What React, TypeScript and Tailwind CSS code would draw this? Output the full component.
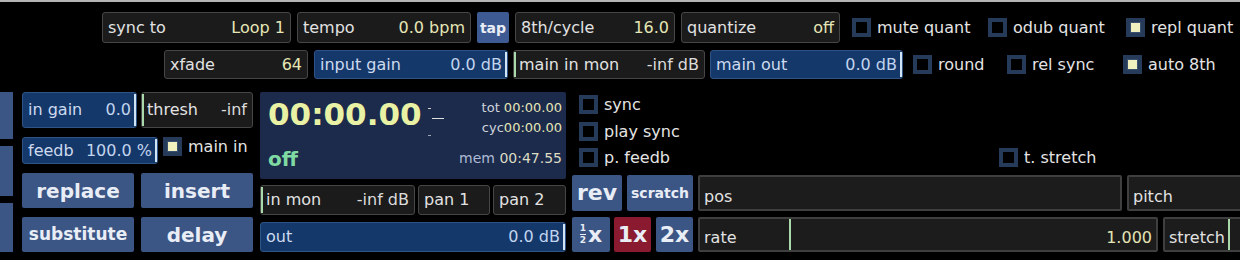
import clsx from "clsx";

type Mark = "left" | "right" | "none";

function Field({
  label,
  value,
  blue,
  mark = "none",
  valueClass,
  className,
}: {
  label: string;
  value?: string;
  blue?: boolean;
  mark?: Mark;
  valueClass?: string;
  className?: string;
}) {
  return (
    <div
      className={clsx(
        "relative flex items-center justify-between px-[5px] rounded-[3px] border whitespace-nowrap",
        blue
          ? "bg-[#15386a] border-[#2e5384] text-[#cddbef]"
          : "bg-[#1b1b1b] border-[#464646] text-[#e2e2e2]",
        className
      )}
    >
      <span>{label}</span>
      {value && (
        <span className={clsx(valueClass ?? (blue ? "text-[#c2d5ee]" : "text-[#e6e6b6]"))}>{value}</span>
      )}
      {mark === "left" && (
        <span className="absolute left-0 top-[1px] bottom-[1px] w-[2px] bg-[#a9d9ab]" />
      )}
      {mark === "right" && (
        <span className="absolute right-0 top-[1px] bottom-[1px] w-[2px] bg-[#cfe4f4]" />
      )}
    </div>
  );
}

function Check({ label, checked, className }: { label: string; checked?: boolean; className?: string }) {
  return (
    <div className={clsx("flex items-center gap-[6px] whitespace-nowrap text-[#e4e4e4]", className)}>
      <div className="w-[19px] h-[19px] bg-[#263a5a] p-[4px] shrink-0">
        {checked ? (
          <div className="w-full h-full bg-[#f1f1bf] border border-[#3b5070]" />
        ) : (
          <div className="w-full h-full bg-black" />
        )}
      </div>
      <span>{label}</span>
    </div>
  );
}

function Btn({
  children,
  red,
  className,
}: {
  children: React.ReactNode;
  red?: boolean;
  className?: string;
}) {
  return (
    <div
      className={clsx(
        "flex items-center justify-center rounded-[2px] font-bold text-[#e9edf5] whitespace-nowrap",
        red ? "bg-[#8a1a2f]" : "bg-[#3b5585]",
        className
      )}
    >
      {children}
    </div>
  );
}

function Bar({ label, value, children, className }: { label: string; value?: string; children?: React.ReactNode; className?: string }) {
  return (
    <div
      className={clsx(
        "relative flex items-end justify-between px-[4px] pb-[4px] bg-[#1c1c1c] border-2 border-[#3f3f3f] rounded-[2px] text-[#e2e2e2] whitespace-nowrap shrink-0",
        className
      )}
    >
      <span>{label}</span>
      {value && <span className="text-[#e4e4b4]">{value}</span>}
      {children}
    </div>
  );
}

export default function App() {
  return (
    <div className="w-[1240px] h-[260px] bg-black overflow-hidden font-['DejaVu_Sans',sans-serif] text-[16px] leading-none">
      <div className="h-[2px] bg-[#b4b4b4]" />

      {/* top row */}
      <div className="flex items-stretch h-[31px] mt-[10px] pl-[102px]">
        <Field label="sync to" value="Loop 1" className="w-[189px]" />
        <Field label="tempo" value="0.0 bpm" className="w-[174px] ml-[6px]" />
        <Btn className="w-[32px] ml-[6px] text-[14px] bg-[#3d5a92]">tap</Btn>
        <Field label="8th/cycle" value="16.0" className="w-[160px] ml-[6px]" />
        <Field label="quantize" value="off" className="w-[159px] ml-[6px]" />
        <div className="flex items-center ml-[12px]">
          <Check label="mute quant" className="w-[136px]" />
          <Check label="odub quant" className="w-[138px]" />
          <Check label="repl quant" checked />
        </div>
      </div>

      {/* second row */}
      <div className="flex items-stretch h-[29px] mt-[7px] pl-[164px]">
        <Field label="xfade" value="64" className="w-[144px]" />
        <Field label="input gain" value="0.0 dB" blue mark="right" className="w-[194px] ml-[6px]" />
        <Field label="main in mon" value="-inf dB" mark="left" valueClass="text-[#dcdcdc]" className="w-[192px] ml-[5px]" />
        <Field label="main out" value="0.0 dB" blue mark="right" className="w-[193px] ml-[5px]" />
        <div className="flex items-center ml-[10px]">
          <Check label="round" className="w-[94px]" />
          <Check label="rel sync" className="w-[116px]" />
          <Check label="auto 8th" checked />
        </div>
      </div>

      {/* loop strip */}
      <div className="flex mt-[13px] h-[160px]">
        <div className="flex flex-col w-[13px] shrink-0">
          <div className="h-[47px] bg-[#3b5585]" />
          <div className="h-[50px] mt-[7px] bg-[#3b5585]" />
          <div className="h-[49px] mt-[7px] bg-[#3b5585]" />
        </div>

        <div className="ml-[9px] w-[231px] shrink-0 flex flex-col">
          <div className="flex h-[36px]">
            <Field label="in gain" value="0.0" blue mark="right" className="w-[115px]" />
            <Field label="thresh" value="-inf" mark="left" valueClass="text-[#dcdcdc]" className="w-[112px] ml-[4px]" />
          </div>
          <div className="flex h-[27px] mt-[9px]">
            <Field label="feedb" value="100.0 %" blue mark="right" className="w-[136px]" />
            <Check label="main in" checked className="ml-[5px] self-start" />
          </div>
          <div className="flex h-[35px] mt-[9px]">
            <Btn className="w-[112px] text-[20px]">replace</Btn>
            <Btn className="w-[112px] ml-[7px] text-[20px]">insert</Btn>
          </div>
          <div className="flex h-[35px] mt-[9px]">
            <Btn className="w-[112px] text-[17px]">substitute</Btn>
            <Btn className="w-[112px] ml-[7px] text-[20px]">delay</Btn>
          </div>
        </div>

        <div className="ml-[7px] w-[306px] shrink-0 flex flex-col">
          <div className="h-[87px] bg-[#1c2b4b] rounded-[2px] flex justify-between pl-[8px] pr-[4px]">
            <div className="flex flex-col justify-between pt-[7px] pb-[10px]">
              <div className="flex items-start">
                <span className="text-[31px] font-bold text-[#e9f2a4]">00:00.00</span>
                <div className="flex flex-col ml-[6px] pt-[9px]">
                  <div className="w-[3px] h-[1px] bg-[#d0d0d0]" />
                  <div className="w-[12px] h-[1px] bg-[#e0e0e0] mt-[9px] ml-[4px]" />
                  <div className="w-[3px] h-[1px] bg-[#a0a8b8] mt-[16px]" />
                </div>
              </div>
              <span className="text-[20px] font-bold text-[#7fd9a3]">off</span>
            </div>
            <div className="flex flex-col items-end justify-between pt-[9px] pb-[14px] text-[13px]">
              <div className="flex flex-col items-end gap-[7px]">
                <div>
                  <span className="text-[#cfd4dc]">tot </span>
                  <span className="text-[#e6e6b8]">00:00.00</span>
                </div>
                <div>
                  <span className="text-[#cfd4dc]">cyc</span>
                  <span className="text-[#e6e6b8]">00:00.00</span>
                </div>
              </div>
              <div className="text-[14px]">
                <span className="text-[#aebad6]">mem </span>
                <span className="text-[#dcdcc4]">00:47.55</span>
              </div>
            </div>
          </div>
          <div className="flex h-[30px] mt-[6px]">
            <Field label="in mon" value="-inf dB" mark="left" valueClass="text-[#dcdcdc]" className="w-[155px]" />
            <Field label="pan 1" className="w-[72px] ml-[3px]" />
            <Field label="pan 2" className="w-[73px] ml-[3px]" />
          </div>
          <Field label="out" value="0.0 dB" blue mark="right" className="h-[30px] mt-[7px]" />
        </div>

        <div className="ml-[6px] flex-1 flex flex-col min-w-0">
          <div className="h-[83px] flex flex-col pl-[7px] pt-[3px]">
            <Check label="sync" />
            <Check label="play sync" className="mt-[8px]" />
            <div className="flex mt-[7px]">
              <Check label="p. feedb" className="w-[420px]" />
              <Check label="t. stretch" />
            </div>
          </div>
          <div className="flex h-[36px]">
            <Btn className="w-[50px] text-[22px] shrink-0">rev</Btn>
            <Btn className="w-[66px] ml-[5px] text-[14px] shrink-0">scratch</Btn>
            <Bar label="pos" className="w-[424px] ml-[5px]" />
            <Bar label="pitch" className="w-[130px] ml-[5px]" />
          </div>
          <div className="flex h-[35px] mt-[6px]">
            <Btn className="w-[38px] text-[22px] shrink-0">
              <span className="flex flex-col items-center text-[9px] leading-none mr-[2px]">
                <span>1</span>
                <span className="w-[6px] h-[1px] bg-[#e9edf5] my-[1px]" />
                <span>2</span>
              </span>
              x
            </Btn>
            <Btn red className="w-[37px] ml-[4px] text-[22px] shrink-0">1x</Btn>
            <Btn className="w-[37px] ml-[5px] text-[22px] shrink-0">2x</Btn>
            <Bar label="rate" value="1.000" className="w-[460px] ml-[5px]">
              <span className="absolute left-[89px] top-0 bottom-0 w-[2px] bg-[#a9d9ab]" />
            </Bar>
            <Bar label="stretch" className="w-[90px] ml-[5px]">
              <span className="absolute left-[63px] top-0 bottom-0 w-[2px] bg-[#a9d9ab]" />
            </Bar>
          </div>
        </div>
      </div>
    </div>
  );
}
